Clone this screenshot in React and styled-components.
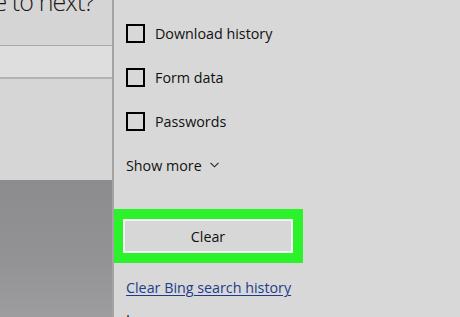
import React from "react";
import styled, { createGlobalStyle } from "styled-components";

const Global = createGlobalStyle`
  html, body {
    margin: 0;
    padding: 0;
    background: #d8d8d8;
  }
`;

const Screen = styled.div`
  display: flex;
  width: 460px;
  height: 317px;
  overflow: hidden;
  font-family: "Open Sans", "Noto Sans", sans-serif;
  color: #111;
`;

const PagePane = styled.div`
  width: 112px;
  flex: none;
  display: flex;
  flex-direction: column;
  overflow: hidden;
  border-right: 2px solid #a3a3a3;
`;

const Heading = styled.div`
  height: 46px;
  flex: none;
  background: #d5d5d5;
  border-bottom: 1px solid #a9a9a9;
  box-sizing: border-box;
  overflow: hidden;
  white-space: nowrap;
  display: flex;
  justify-content: flex-end;
  padding-right: 18px;
  h1 {
    margin: -15px 0 0;
    font-size: 25px;
    font-weight: 300;
    line-height: 32px;
    letter-spacing: -0.9px;
    color: #1a1a1a;
  }
`;

const Band = styled.div`
  height: 33px;
  flex: none;
  background: #dedede;
  border-bottom: 2px solid #b3b3b3;
  box-sizing: border-box;
`;

const Blank = styled.div`
  height: 101px;
  flex: none;
  background: #d6d6d6;
`;

const Photo = styled.div`
  flex: 1;
  background: linear-gradient(180deg, #8c8c8e 0%, #939395 60%, #9d9d9f 100%);
`;

const Panel = styled.div`
  flex: 1;
  display: flex;
  flex-direction: column;
  padding: 11px 0 0 12px;
  background: #d8d8d8;
  overflow: hidden;
  & > * {
    flex: none;
  }
`;

const Row = styled.label`
  height: 44px;
  display: flex;
  align-items: center;
  gap: 10px;
  font-size: 14.3px;
`;

const Box = styled.span`
  width: 15px;
  height: 15px;
  border: 2px solid #000;
  flex: none;
`;

const More = styled.div`
  height: 44px;
  display: flex;
  align-items: center;
  gap: 8px;
  font-size: 14.3px;
`;

const Highlight = styled.div`
  margin: 22px 0 0 -12px;
  width: 189px;
  height: 54px;
  box-sizing: border-box;
  padding: 10px 10px 10px 9px;
  background: #2cf22c;
`;

const ClearButton = styled.button`
  width: 100%;
  height: 100%;
  border: 2px solid #f5f5f5;
  background: #d7d7d7;
  font-family: inherit;
  font-size: 14.3px;
  color: #111;
  padding: 0;
`;

const Link = styled.a`
  margin-top: 15px;
  font-size: 14.3px;
  line-height: 20px;
  color: #1d3c8c;
  text-decoration: underline;
  text-underline-offset: 2px;
`;

const Cut = styled.div`
  margin-top: 12px;
  font-size: 14.3px;
  line-height: 20px;
`;

const Chevron = () => (
  <svg width="9" height="6" viewBox="0 0 9 6" fill="none">
    <path d="M0.5 0.8 L4.5 4.8 L8.5 0.8" stroke="#222" strokeWidth="1.1" />
  </svg>
);

const items = ["Download history", "Form data", "Passwords"];

export default function App() {
  return (
    <Screen>
      <Global />
      <PagePane>
        <Heading>
          <h1>Where to next?</h1>
        </Heading>
        <Band />
        <Blank />
        <Photo />
      </PagePane>
      <Panel>
        {items.map((label) => (
          <Row key={label}>
            <Box />
            {label}
          </Row>
        ))}
        <More>
          Show more <Chevron />
        </More>
        <Highlight>
          <ClearButton>Clear</ClearButton>
        </Highlight>
        <Link>Clear Bing search history</Link>
        <Cut>Learn more</Cut>
      </Panel>
    </Screen>
  );
}
